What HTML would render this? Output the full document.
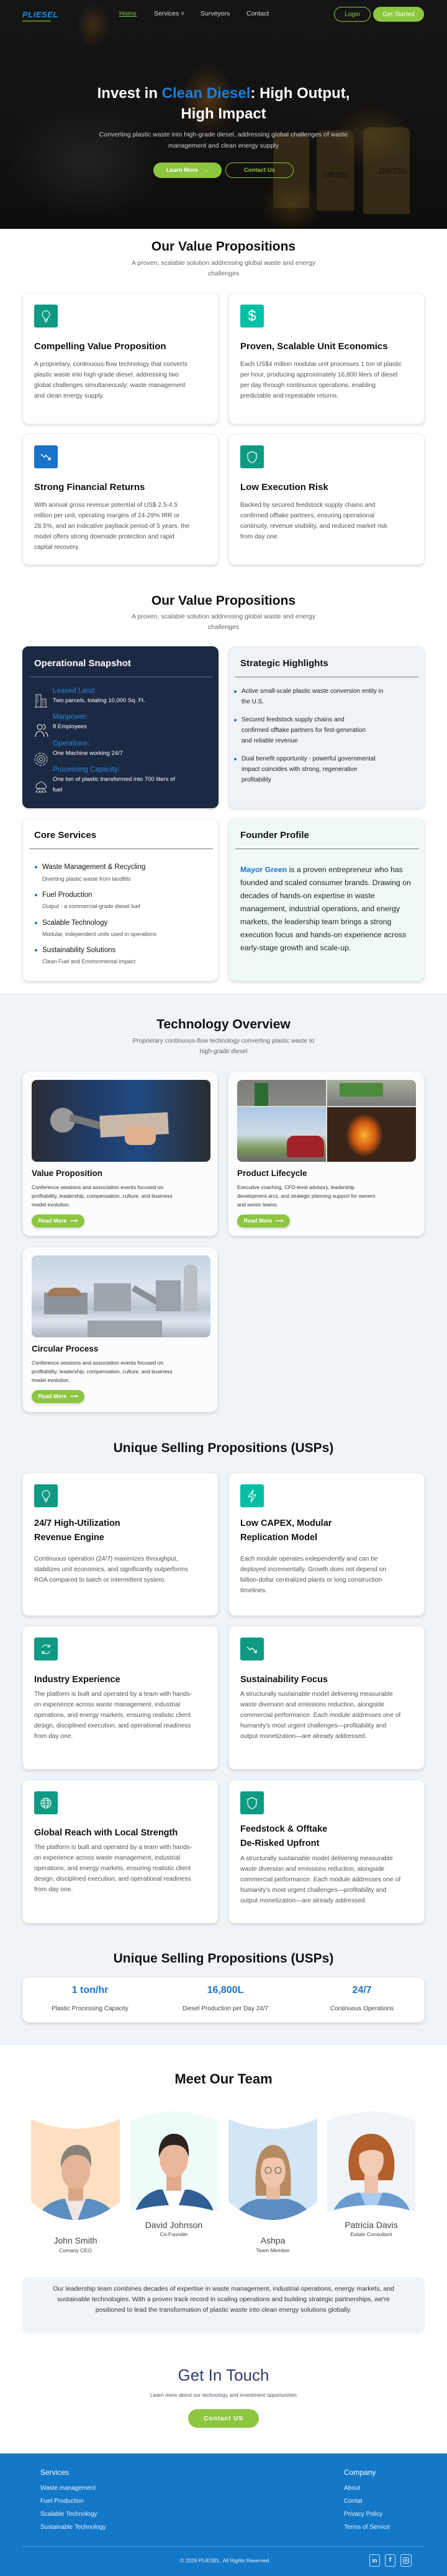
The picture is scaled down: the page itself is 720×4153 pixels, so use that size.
<!DOCTYPE html>
<html><head><meta charset="utf-8">
<style>
*{margin:0;padding:0;box-sizing:border-box}
body{width:720px;height:4153px;position:relative;background:#fff;font-family:"Liberation Sans",Arial,sans-serif;color:#111;overflow:hidden}
.a{position:absolute}
.c{text-align:center}
.h2{font-size:21px;font-weight:bold;color:#111;left:0;width:720px;text-align:center;line-height:26px}
.sub{font-size:10.5px;color:#666;line-height:17px;text-align:center}
.card{position:absolute;background:#fff;border-radius:10px;border:1px solid #ececec;box-shadow:0 2px 5px rgba(0,0,0,.14)}
.ic{position:absolute;left:18px;top:18px;width:38px;height:37px;border-radius:3px;background:#0e9a83;display:flex;align-items:center;justify-content:center}
.ct{position:absolute;left:18px;font-size:15px;font-weight:bold;color:#111;line-height:23px}
.cb{position:absolute;left:18px;font-size:10.2px;color:#555;line-height:17px}
.btn{position:absolute;border-radius:14px;font-size:10px;font-weight:bold;display:flex;align-items:center;justify-content:center}
.green{background:#8dc63f;color:#fff}
.rm{position:absolute;left:14px;width:85px;height:21px;border-radius:11px;background:#8dc63f;color:#fff;font-size:9px;font-weight:bold;display:flex;align-items:center;justify-content:center;box-shadow:0 2px 4px rgba(0,0,0,.15)}
.lab{position:absolute;left:48px;color:#2a86d8;font-size:11.5px;line-height:14px}
.val{position:absolute;left:48px;color:#fff;font-size:9.5px;line-height:18px}
.bl{position:absolute;left:20px;font-size:10px;color:#222;line-height:17px;width:245px}
.bl:before{content:"";position:absolute;left:-12px;top:7px;width:4px;height:4px;border-radius:50%;background:#1a73c8}
.csT{position:absolute;left:31px;font-size:11.5px;color:#111;line-height:14px}
.csT:before{content:"";position:absolute;left:-12px;top:5px;width:4px;height:4px;border-radius:50%;background:#1a73c8}
.csS{position:absolute;left:31px;font-size:9px;color:#555;line-height:12px}
.tt{position:absolute;left:14px;font-size:13.5px;font-weight:bold;color:#111}
.tb{position:absolute;left:14px;font-size:8.5px;color:#333;line-height:14px;width:230px}
.fl{position:absolute;color:#e8f1fb;font-size:10px}
</style></head><body>

<!-- HERO -->
<div class="a" style="left:0;top:0;width:720px;height:369px;background:#151515;overflow:hidden">
  <div class="a" style="left:0;top:0;width:720px;height:369px;background:
   radial-gradient(ellipse 60px 80px at 335px 160px,rgba(200,120,30,.45),transparent 70%),
   radial-gradient(ellipse 40px 50px at 150px 40px,rgba(190,110,30,.35),transparent 70%),
   radial-gradient(ellipse 90px 70px at 600px 220px,rgba(160,120,40,.35),transparent 70%),
   radial-gradient(ellipse 70px 60px at 470px 330px,rgba(170,120,30,.35),transparent 70%),
   radial-gradient(ellipse 180px 140px at 140px 260px,rgba(90,90,90,.35),transparent 70%),
   linear-gradient(180deg,#1d1d1f 0%,#1a1816 60%,#141210 100%)"></div>
  <div class="a" style="left:440px;top:215px;width:58px;height:120px;background:rgba(120,95,40,.45);border-radius:10px 10px 0 0"></div>
  <div class="a" style="left:510px;top:210px;width:60px;height:130px;background:rgba(120,95,40,.45);border-radius:10px 10px 0 0"></div>
  <div class="a" style="left:585px;top:205px;width:75px;height:140px;background:rgba(130,105,45,.45);border-radius:10px 10px 0 0"></div>
  <div class="a" style="left:610px;top:268px;font-size:13px;font-weight:bold;color:rgba(30,25,15,.7)">DIESEL</div>
  <div class="a" style="left:520px;top:275px;font-size:12px;font-weight:bold;color:rgba(30,25,15,.7)">DIESEL</div>
  <div class="a" style="left:0;top:0;width:720px;height:369px;background:rgba(0,0,0,.25)"></div>
  <!-- logo -->
  <div class="a" style="left:36px;top:16px;font-size:13px;font-weight:bold;color:#1d8fe0;letter-spacing:.5px;font-style:italic">PLIESEL</div>
  <div class="a" style="left:36px;top:33px;width:46px;height:2px;background:#8dc63f;opacity:.6"></div>
  <!-- nav -->
  <div class="a" style="left:192px;top:16px;font-size:10.5px;color:#8dc63f;text-decoration:underline">Home</div>
  <div class="a" style="left:248px;top:16px;font-size:10.5px;color:#ddd">Services ˅</div>
  <div class="a" style="left:323px;top:16px;font-size:10.5px;color:#ddd">Surveyors</div>
  <div class="a" style="left:397px;top:16px;font-size:10.5px;color:#ddd">Contact</div>
  <div class="btn" style="left:538px;top:11px;width:59px;height:24px;border:1px solid #8dc63f;color:#8dc63f;font-weight:normal;border-radius:12px;font-size:10px">Login</div>
  <div class="btn green" style="left:601px;top:11px;width:82px;height:24px;border-radius:12px;font-weight:normal;font-size:10px">Get Started</div>
  <!-- title -->
  <div class="a c" style="left:0;top:134px;width:720px;font-size:24px;font-weight:bold;color:#fff;line-height:33px">Invest in <span style="color:#1a7fd9">Clean Diesel</span>: High Output,<br>High Impact</div>
  <div class="a c" style="left:150px;top:208px;width:420px;font-size:10.5px;color:#cfcfcf;line-height:18px">Converting plastic waste into high-grade diesel, addressing global challenges of waste management and clean energy supply</div>
  <div class="btn green" style="left:247px;top:262px;width:110px;height:25px;border-radius:13px;font-size:9.5px">Learn More &nbsp;&nbsp;→</div>
  <div class="btn" style="left:363px;top:262px;width:110px;height:25px;border-radius:13px;border:1px solid #8dc63f;color:#8dc63f;font-size:9.5px">Contact Us</div>
</div>

<!-- VALUE PROPS 1 -->
<div class="a h2" style="top:385px">Our Value Propositions</div>
<div class="a sub" style="left:195px;top:416px;width:330px">A proven, scalable solution addressing global waste and energy challenges</div>

<div class="card" style="left:36px;top:472px;width:316px;height:212px">
  <div class="ic"><svg width="20" height="22" viewBox="0 0 20 22" fill="none" stroke="#fff" stroke-width="1.2"><path d="M10 2a6 6 0 0 0-3.5 10.8c.6.5 1 1.2 1 2V16h5v-1.2c0-.8.4-1.5 1-2A6 6 0 0 0 10 2z"/><path d="M7.5 18h5M8.5 20h3"/></svg></div>
  <div class="ct" style="top:74px">Compelling Value Proposition</div>
  <div class="cb" style="top:106px;width:250px">A proprietary, continuous-flow technology that converts plastic waste into high-grade diesel, addressing two global challenges simultaneously: waste management and clean energy supply.</div>
</div>
<div class="card" style="left:368px;top:472px;width:316px;height:212px">
  <div class="ic" style="background:#00bfa5"><span style="color:#fff;font-size:24px">$</span></div>
  <div class="ct" style="top:74px">Proven, Scalable Unit Economics</div>
  <div class="cb" style="top:106px;width:260px">Each US$4 million modular unit processes 1 ton of plastic per hour, producing approximately 16,800 liters of diesel per day through continuous operations, enabling predictable and repeatable returns.</div>
</div>
<div class="card" style="left:36px;top:699px;width:316px;height:212px">
  <div class="ic" style="background:#1a73c8"><svg width="20" height="16" viewBox="0 0 20 16" fill="none" stroke="#fff" stroke-width="1.4"><path d="M2 3l5 5 3-3 7 7M17 8v4h-4"/></svg></div>
  <div class="ct" style="top:74px">Strong Financial Returns</div>
  <div class="cb" style="top:106px;width:255px">With annual gross revenue potential of US$ 2.5-4.5 million per unit, operating margins of 24-29% IRR or 28.5%, and an indicative payback period of 5 years, the model offers strong downside protection and rapid capital recovery.</div>
</div>
<div class="card" style="left:368px;top:699px;width:316px;height:212px">
  <div class="ic"><svg width="18" height="22" viewBox="0 0 18 22" fill="none" stroke="#fff" stroke-width="1.3"><path d="M9 2l7 3v6c0 5-3.5 8-7 9-3.5-1-7-4-7-9V5z"/></svg></div>
  <div class="ct" style="top:74px">Low Execution Risk</div>
  <div class="cb" style="top:106px;width:260px">Backed by secured feedstock supply chains and confirmed offtake partners, ensuring operational continuity, revenue visibility, and reduced market risk from day one.</div>
</div>

<!-- VALUE PROPS 2 -->
<div class="a h2" style="top:956px">Our Value Propositions</div>
<div class="a sub" style="left:195px;top:986px;width:330px">A proven, scalable solution addressing global waste and energy challenges</div>

<div class="card" style="left:36px;top:1042px;width:316px;height:261px;background:#1b2942;border-color:#1b2942">
  <div class="a" style="left:18px;top:18px;font-size:15px;font-weight:bold;color:#fff">Operational Snapshot</div>
  <div class="a" style="left:10px;top:48px;width:296px;height:1px;background:#5c6b83"></div>
  <svg class="a" style="left:18px;top:75px" width="22" height="24" viewBox="0 0 22 24" fill="none" stroke="#ddd" stroke-width="1"><rect x="3" y="2" width="8" height="20"/><rect x="11" y="9" width="8" height="13"/><path d="M1 22h20M5 5h2M5 8h2M5 11h2M5 14h2M13 12h2M13 15h2M13 18h2M16 12h1M16 15h1"/></svg>
  <div class="lab" style="top:64px">Leased Land:</div>
  <div class="val" style="top:78px">Two parcels, totaling 10,000 Sq. Ft.</div>
  <svg class="a" style="left:18px;top:122px" width="24" height="24" viewBox="0 0 24 24" fill="none" stroke="#fff" stroke-width="1.1"><circle cx="9" cy="7" r="4"/><path d="M2 23c0-5 3-9 7-9s7 4 7 9"/><path d="M14 3a4 4 0 0 1 0 8M18 15c2 1 4 4 4 8"/></svg>
  <div class="lab" style="top:106px">Manpower:</div>
  <div class="val" style="top:120px">8 Employees</div>
  <svg class="a" style="left:18px;top:170px" width="22" height="22" viewBox="0 0 22 22" fill="none" stroke="#ddd" stroke-width="1"><circle cx="11" cy="11" r="10" stroke-dasharray="5 2"/><circle cx="11" cy="11" r="6"/><circle cx="11" cy="11" r="2.5"/></svg>
  <div class="lab" style="top:149px">Operations:</div>
  <div class="val" style="top:163px">One Machine working 24/7</div>
  <svg class="a" style="left:18px;top:214px" width="22" height="22" viewBox="0 0 22 22" fill="none" stroke="#ddd" stroke-width="1"><path d="M4 14a5 5 0 0 1 3-8 5 5 0 0 1 9 1 4 4 0 0 1 2 7z"/><path d="M3 20c1-4 5-6 8-6s7 2 8 6z"/><path d="M8 20l2-4M14 20l-2-4"/></svg>
  <div class="lab" style="top:191px">Processing Capacity:</div>
  <div class="val" style="top:205px;width:200px;line-height:17px">One ton of plastic transformed into 700 liters of fuel</div>
</div>
<div class="card" style="left:368px;top:1042px;width:316px;height:261px;background:#eef3f8">
  <div class="a" style="left:18px;top:18px;font-size:15px;font-weight:bold;color:#111">Strategic Highlights</div>
  <div class="a" style="left:10px;top:48px;width:296px;height:1px;background:#777"></div>
  <div class="bl" style="top:63px">Active small-scale plastic waste conversion entity in the U.S.</div>
  <div class="bl" style="top:109px;width:200px">Secured feedstock supply chains and confirmed offtake partners for first-generation and reliable revenue</div>
  <div class="bl" style="top:172px;width:230px">Dual benefit opportunity - powerful governmental impact coincides with strong, regenerative profitability</div>
</div>
<div class="card" style="left:36px;top:1320px;width:316px;height:262px">
  <div class="a" style="left:18px;top:17px;font-size:15px;font-weight:bold;color:#111">Core Services</div>
  <div class="a" style="left:10px;top:47px;width:296px;height:1px;background:#777"></div>
  <div class="csT" style="top:70px">Waste Management &amp; Recycling</div>
  <div class="csS" style="top:90px">Diverting plastic waste from landfills</div>
  <div class="csT" style="top:115px">Fuel Production</div>
  <div class="csS" style="top:134px">Output - a commercial-grade diesel fuel</div>
  <div class="csT" style="top:160px">Scalable Technology</div>
  <div class="csS" style="top:179px">Modular, independent units used in operations</div>
  <div class="csT" style="top:204px">Sustainability Solutions</div>
  <div class="csS" style="top:223px">Clean Fuel and Environmental impact</div>
</div>
<div class="card" style="left:368px;top:1320px;width:316px;height:262px;background:#effaf8">
  <div class="a" style="left:18px;top:17px;font-size:15px;font-weight:bold;color:#111">Founder Profile</div>
  <div class="a" style="left:10px;top:47px;width:296px;height:1px;background:#777"></div>
  <div class="a" style="left:18px;top:71px;width:280px;font-size:12.3px;line-height:21px;color:#222"><b style="color:#1a73c8">Mayor Green</b> is a proven entrepreneur who has founded and scaled consumer brands. Drawing on decades of hands-on expertise in waste management, industrial operations, and energy markets, the leadership team brings a strong execution focus and hands-on experience across early-stage growth and scale-up.</div>
</div>

<!-- GREY SECTION -->
<div class="a" style="left:0;top:1601px;width:720px;height:1696px;background:#eff4f9"></div>
<div class="a h2" style="top:1639px">Technology Overview</div>
<div class="a sub" style="left:205px;top:1670px;width:310px;font-size:10px">Proprietary continuous-flow technology converting plastic waste to high-grade diesel</div>

<div class="card" style="left:36px;top:1727px;width:315px;height:266px;background:#fafcfe;border-radius:12px">
  <div class="a" style="left:14px;top:13px;width:288px;height:132px;border-radius:8px;overflow:hidden;background:linear-gradient(90deg,#2a2d33 0%,#1d3c6a 35%,#214a80 60%,#2a2d33 100%)">
    <div class="a" style="left:30px;top:45px;width:40px;height:40px;border-radius:50%;background:#9a9a9a"></div>
    <div class="a" style="left:60px;top:65px;width:80px;height:12px;background:#777;transform:rotate(15deg)"></div>
    <div class="a" style="left:110px;top:55px;width:110px;height:35px;background:#c9b8a8;transform:rotate(-3deg)"></div>
    <div class="a" style="left:150px;top:75px;width:50px;height:30px;background:#e0b090;border-radius:10px"></div>
  </div>
  <div class="tt" style="top:156px">Value Proposition</div>
  <div class="tb" style="top:179px">Conference sessions and association events focused on profitability, leadership, compensation, culture, and business model evolution.</div>
  <div class="rm" style="top:230px">Read More &nbsp;⟶</div>
</div>
<div class="card" style="left:367px;top:1727px;width:317px;height:266px;background:#fafcfe;border-radius:12px">
  <div class="a" style="left:14px;top:13px;width:288px;height:132px;border-radius:8px;overflow:hidden;background:#ddd">
    <div class="a" style="left:0;top:0;width:143px;height:42px;background:linear-gradient(180deg,#7d7d78,#8a8a86);"></div>
    <div class="a" style="left:28px;top:5px;width:22px;height:37px;background:#2f6b35"></div>
    <div class="a" style="left:145px;top:0;width:143px;height:42px;background:linear-gradient(180deg,#a7ad9c,#7a7a7a)"></div>
    <div class="a" style="left:165px;top:5px;width:70px;height:22px;background:#4d8a3a"></div>
    <div class="a" style="left:0;top:44px;width:143px;height:88px;background:linear-gradient(180deg,#a9c8e6 0%,#cfdbe6 50%,#7d9a5a 75%,#6a6a6a 100%)"></div>
    <div class="a" style="left:80px;top:90px;width:60px;height:35px;background:#a2222a;border-radius:12px 12px 4px 4px"></div>
    <div class="a" style="left:145px;top:44px;width:143px;height:88px;background:radial-gradient(ellipse 30px 35px at 60px 45px,#ffb030,#d05a10 60%,#3a2418 100%)"></div>
  </div>
  <div class="tt" style="top:156px">Product Lifecycle</div>
  <div class="tb" style="top:179px;width:235px;font-size:8.3px">Executive coaching, CFO-level advisory, leadership development arcs, and strategic planning support for owners and senior teams.</div>
  <div class="rm" style="top:230px">Read More &nbsp;⟶</div>
</div>
<div class="card" style="left:36px;top:2010px;width:315px;height:267px;background:#fafcfe;border-radius:12px">
  <div class="a" style="left:14px;top:13px;width:288px;height:132px;border-radius:8px;overflow:hidden;background:linear-gradient(180deg,#c5d3e3 0%,#dde5ee 40%,#b9c4cf 65%,#dfe6ee 80%,#aab5c0 100%)">
    <div class="a" style="left:20px;top:60px;width:70px;height:35px;background:#8d939a"></div>
    <div class="a" style="left:25px;top:52px;width:55px;height:14px;background:#a07a5a;border-radius:20px 20px 0 0"></div>
    <div class="a" style="left:100px;top:45px;width:60px;height:45px;background:#9ea6ae"></div>
    <div class="a" style="left:160px;top:60px;width:50px;height:10px;background:#8a9096;transform:rotate(30deg)"></div>
    <div class="a" style="left:245px;top:15px;width:22px;height:75px;background:#b8bec4;border-radius:8px 8px 0 0"></div>
    <div class="a" style="left:200px;top:40px;width:40px;height:50px;background:#9aa2aa"></div>
    <div class="a" style="left:90px;top:105px;width:120px;height:27px;background:#9aa2aa"></div>
  </div>
  <div class="tt" style="top:156px">Circular Process</div>
  <div class="tb" style="top:179px">Conference sessions and association events focused on profitability, leadership, compensation, culture, and business model evolution.</div>
  <div class="rm" style="top:230px">Read More &nbsp;⟶</div>
</div>

<!-- USPs -->
<div class="a h2" style="top:2322px">Unique Selling Propositions (USPs)</div>

<div class="card" style="left:36px;top:2374px;width:316px;height:231px">
  <div class="ic"><svg width="20" height="22" viewBox="0 0 20 22" fill="none" stroke="#fff" stroke-width="1.2"><path d="M10 2a6 6 0 0 0-3.5 10.8c.6.5 1 1.2 1 2V16h5v-1.2c0-.8.4-1.5 1-2A6 6 0 0 0 10 2z"/><path d="M7.5 18h5M8.5 20h3"/></svg></div>
  <div class="ct" style="top:70px;font-size:14.5px">24/7 High-Utilization<br>Revenue Engine</div>
  <div class="cb" style="top:130px;width:250px">Continuous operation (24/7) maximizes throughput, stabilizes unit economics, and significantly outperforms ROA compared to batch or intermittent system.</div>
</div>
<div class="card" style="left:368px;top:2374px;width:316px;height:231px">
  <div class="ic" style="background:#00bfa5"><svg width="18" height="22" viewBox="0 0 18 22" fill="none" stroke="#fff" stroke-width="1.2"><path d="M11 1L3 12h6l-2 9 8-12H9z"/></svg></div>
  <div class="ct" style="top:70px;font-size:14.5px">Low CAPEX, Modular<br>Replication Model</div>
  <div class="cb" style="top:130px;width:260px">Each module operates independently and can be deployed incrementally. Growth does not depend on billion-dollar centralized plants or long construction timelines.</div>
</div>
<div class="card" style="left:36px;top:2621px;width:316px;height:232px">
  <div class="ic"><svg width="20" height="20" viewBox="0 0 20 20" fill="none" stroke="#fff" stroke-width="1.2"><path d="M16 6a7 7 0 0 0-12 1M4 14a7 7 0 0 0 12-1"/><path d="M16 2v4h-4M4 18v-4h4"/></svg></div>
  <div class="ct" style="top:75px;font-size:14.5px">Industry Experience</div>
  <div class="cb" style="top:101px;width:255px">The platform is built and operated by a team with hands-on experience across waste management, industrial operations, and energy markets, ensuring realistic client design, disciplined execution, and operational readiness from day one.</div>
</div>
<div class="card" style="left:368px;top:2621px;width:316px;height:232px">
  <div class="ic"><svg width="20" height="16" viewBox="0 0 20 16" fill="none" stroke="#fff" stroke-width="1.4"><path d="M2 4l5 5 3-3 7 7M17 9v4h-4"/></svg></div>
  <div class="ct" style="top:75px;font-size:14.5px">Sustainability Focus</div>
  <div class="cb" style="top:101px;width:260px">A structurally sustainable model delivering measurable waste diversion and emissions reduction, alongside commercial performance. Each module addresses one of humanity's most urgent challenges—profitability and output monetization—are already addressed.</div>
</div>
<div class="card" style="left:36px;top:2869px;width:316px;height:232px">
  <div class="ic"><svg width="20" height="20" viewBox="0 0 20 20" fill="none" stroke="#fff" stroke-width="1.1"><circle cx="10" cy="10" r="8"/><ellipse cx="10" cy="10" rx="3.5" ry="8"/><path d="M2 10h16M3.5 6h13M3.5 14h13"/></svg></div>
  <div class="ct" style="top:74px;font-size:14.5px">Global Reach with Local Strength</div>
  <div class="cb" style="top:100px;width:255px">The platform is built and operated by a team with hands-on experience across waste management, industrial operations, and energy markets, ensuring realistic client design, disciplined execution, and operational readiness from day one.</div>
</div>
<div class="card" style="left:368px;top:2869px;width:316px;height:232px">
  <div class="ic"><svg width="18" height="22" viewBox="0 0 18 22" fill="none" stroke="#fff" stroke-width="1.3"><path d="M9 2l7 3v6c0 5-3.5 8-7 9-3.5-1-7-4-7-9V5z"/></svg></div>
  <div class="ct" style="top:68px;font-size:14.5px">Feedstock &amp; Offtake<br>De-Risked Upfront</div>
  <div class="cb" style="top:118px;width:260px">A structurally sustainable model delivering measurable waste diversion and emissions reduction, alongside commercial performance. Each module addresses one of humanity's most urgent challenges—profitability and output monetization—are already addressed.</div>
</div>

<div class="a h2" style="top:3145px">Unique Selling Propositions (USPs)</div>
<div class="card" style="left:36px;top:3187px;width:648px;height:74px">
  <div class="a c" style="left:0;top:12px;width:216px;font-size:16px;font-weight:bold;color:#1a73c8">1 ton/hr</div>
  <div class="a c" style="left:0;top:45px;width:216px;font-size:10px;color:#444">Plastic Processing Capacity</div>
  <div class="a c" style="left:218px;top:12px;width:216px;font-size:16px;font-weight:bold;color:#1a73c8">16,800L</div>
  <div class="a c" style="left:218px;top:45px;width:216px;font-size:10px;color:#444">Diesel Production per Day 24/7</div>
  <div class="a c" style="left:438px;top:12px;width:216px;font-size:16px;font-weight:bold;color:#1a73c8">24/7</div>
  <div class="a c" style="left:438px;top:45px;width:216px;font-size:10px;color:#444">Continuous Operations</div>
</div>

<!-- TEAM -->
<div class="a h2" style="top:3339px;font-size:22px">Meet Our Team</div>

<svg class="a" style="left:50px;top:3400px" width="620" height="190" viewBox="0 0 620 190">
  <defs>
    <clipPath id="s1"><path d="M0 16Q71 48 143 16V150Q71 208 0 150Z"/></clipPath>
    <clipPath id="s2"><path d="M159 20Q230 -12 301 20V166Q230 144 159 166Z"/></clipPath>
    <clipPath id="s3"><path d="M318 16Q389 48 461 16V150Q389 208 318 150Z"/></clipPath>
    <clipPath id="s4"><path d="M477 20Q548 -12 619 20V166Q548 144 477 166Z"/></clipPath>
  </defs>
  <g clip-path="url(#s1)"><rect x="0" y="0" width="143" height="200" fill="#ffdfc2"/>
    <path d="M5 200C8 160 30 150 50 145H95C118 150 138 160 140 200Z" fill="#5b8fc0"/><path d="M55 145L71 190 88 145Z" fill="#eee6df"/>
    <rect x="60" y="120" width="24" height="28" fill="#d9a585"/><ellipse cx="72" cy="100" rx="23" ry="30" fill="#e3b495"/><path d="M48 95C46 68 62 58 74 58 90 58 100 70 96 95 94 80 85 74 72 74 60 74 52 82 48 95Z" fill="#8a8176"/></g>
  <g clip-path="url(#s2)"><rect x="159" y="0" width="143" height="200" fill="#eefbf9"/>
    <path d="M162 200C164 145 190 135 205 130H255C275 135 298 145 299 200Z" fill="#2f5f93"/><path d="M212 130L230 175 248 130Z" fill="#fff"/>
    <rect x="218" y="100" width="24" height="32" fill="#e4a98c"/><ellipse cx="230" cy="80" rx="23" ry="30" fill="#eab79a"/><path d="M206 78C204 50 218 40 230 40 244 40 256 50 254 78 250 62 242 58 230 58 218 58 210 64 206 78Z" fill="#2b2320"/></g>
  <g clip-path="url(#s3)"><rect x="318" y="0" width="143" height="200" fill="#d3e6f6"/>
    <path d="M323 200C326 160 345 150 365 145H413C433 150 455 160 456 200Z" fill="#5c8cc0"/>
    <path d="M362 140C360 100 362 60 390 58 418 60 420 100 418 140Z" fill="#b58b62"/>
    <rect x="379" y="120" width="22" height="26" fill="#e8bca0"/><ellipse cx="390" cy="100" rx="20" ry="27" fill="#efc6ab"/><path d="M370 85C372 68 380 62 390 62 402 62 410 70 410 85 402 76 380 76 370 85Z" fill="#b58b62"/>
    <circle cx="382" cy="99" r="5" fill="none" stroke="#555"/><circle cx="398" cy="99" r="5" fill="none" stroke="#555"/></g>
  <g clip-path="url(#s4)"><rect x="477" y="0" width="143" height="200" fill="#eff4f9"/>
    <path d="M480 200C482 150 505 140 525 135H573C595 140 615 150 616 200Z" fill="#6b9ccf"/><path d="M530 135L548 180 566 135Z" fill="#a9cbef"/>
    <path d="M515 115C505 80 515 40 548 40 580 40 592 80 582 115Z" fill="#b4602d"/>
    <rect x="537" y="100" width="22" height="36" fill="#efc2a8"/><ellipse cx="548" cy="82" rx="20" ry="27" fill="#f3ccb4"/><path d="M526 75C528 56 538 50 548 50 560 50 570 58 570 75 562 64 540 62 526 75Z" fill="#b4602d"/></g>
</svg>
<div class="a c" style="left:50px;top:3604px;width:143px;font-size:14px;color:#444">John Smith</div>
<div class="a c" style="left:50px;top:3623px;width:143px;font-size:8.5px;color:#444">Comany CEO</div>
<div class="a c" style="left:209px;top:3579px;width:142px;font-size:14px;color:#444">David Johnson</div>
<div class="a c" style="left:209px;top:3597px;width:142px;font-size:8.5px;color:#444">Co-Founder</div>
<div class="a c" style="left:368px;top:3604px;width:143px;font-size:14px;color:#444">Ashpa</div>
<div class="a c" style="left:368px;top:3623px;width:143px;font-size:8.5px;color:#444">Team Member</div>
<div class="a c" style="left:527px;top:3579px;width:142px;font-size:14px;color:#444">Patricia Davis</div>
<div class="a c" style="left:527px;top:3597px;width:142px;font-size:8.5px;color:#444">Estate Consultant</div>

<div class="a" style="left:36px;top:3671px;width:648px;height:91px;background:#eff4f9;border-radius:10px"></div>
<div class="a c" style="left:80px;top:3682px;width:560px;font-size:10.5px;line-height:17px;color:#333">Our leadership team combines decades of expertise in waste management, industrial operations, energy markets, and sustainable technologies. With a proven track record in scaling operations and building strategic partnerships, we're positioned to lead the transformation of plastic waste into clean energy solutions globally.</div>

<div class="a c" style="left:0;top:3814px;width:720px;font-size:26px;color:#2f3e6e">Get In Touch</div>
<div class="a c" style="left:0;top:3856px;width:720px;font-size:8.5px;color:#556">Learn more about our technology and investment opportunities</div>
<div class="btn green" style="left:303px;top:3884px;width:114px;height:30px;border-radius:15px;font-size:10px;letter-spacing:1px">Contact US</div>

<!-- FOOTER -->
<div class="a" style="left:0;top:3955px;width:720px;height:198px;background:#1478c8;border-top:1px solid #6aa8e0"></div>
<div class="fl" style="left:65px;top:3979px;font-size:12px;color:#fff">Services</div>
<div class="fl" style="left:65px;top:4006px">Waste management</div>
<div class="fl" style="left:65px;top:4027px">Fuel Production</div>
<div class="fl" style="left:65px;top:4048px">Scalable Technology</div>
<div class="fl" style="left:65px;top:4069px">Sustainable Technology</div>
<div class="fl" style="left:554px;top:3979px;font-size:12px;color:#fff">Company</div>
<div class="fl" style="left:554px;top:4006px">About</div>
<div class="fl" style="left:554px;top:4027px">Contat</div>
<div class="fl" style="left:554px;top:4048px">Privacy Policy</div>
<div class="fl" style="left:554px;top:4069px">Terms of Service</div>
<div class="a" style="left:36px;top:4105px;width:648px;height:1px;background:#5b9fdc"></div>
<div class="a" style="left:290px;top:4123px;font-size:8.5px;color:#e8f1fb">© 2026 PLIESEL. All Rights Reserved</div>
<div class="a" style="left:595px;top:4118px;width:17px;height:20px;border:1px solid #cfe3f6;border-radius:3px;color:#fff;font-size:9px;font-weight:bold;text-align:center;line-height:18px">in</div>
<div class="a" style="left:620px;top:4118px;width:17px;height:20px;border:1px solid #cfe3f6;border-radius:3px;color:#fff;font-size:10px;font-weight:bold;text-align:center;line-height:18px">f</div>
<div class="a" style="left:645px;top:4118px;width:18px;height:20px;border:1px solid #cfe3f6;border-radius:3px"><div class="a" style="left:3px;top:4px;width:10px;height:10px;border:1px solid #fff;border-radius:3px"></div><div class="a" style="left:6px;top:7px;width:4px;height:4px;border:1px solid #fff;border-radius:50%"></div></div>
</body></html>
